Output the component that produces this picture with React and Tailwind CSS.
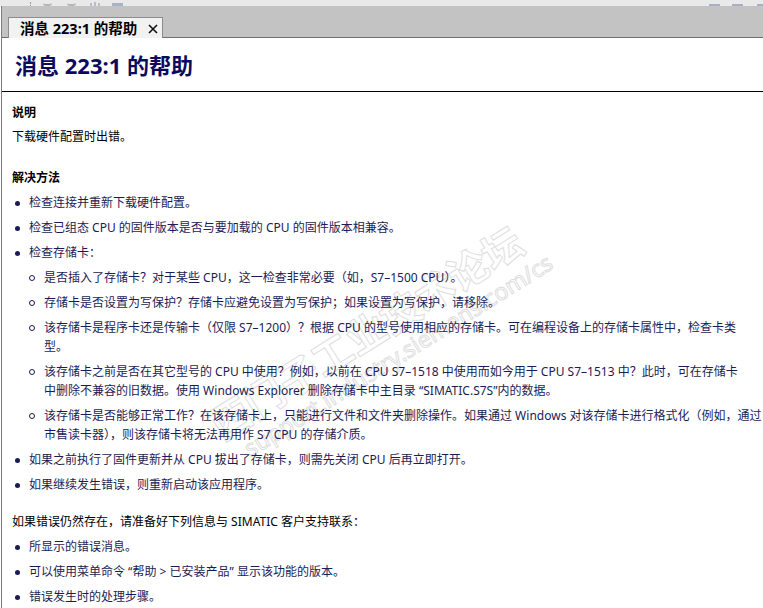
import React from "react";

const subItems = [
    ["是否插入了存储卡？对于某些 CPU，这一检查非常必要（如，S7–1500 CPU）。"],
    ["存储卡是否设置为写保护？存储卡应避免设置为写保护；如果设置为写保护，请移除。"],
    [
        "该存储卡是程序卡还是传输卡（仅限 S7–1200）？根据 CPU 的型号使用相应的存储卡。可在编程设备上的存储卡属性中，检查卡类",
        "型。",
    ],
    [
        "该存储卡之前是否在其它型号的 CPU 中使用？例如，以前在 CPU S7–1518 中使用而如今用于 CPU S7–1513 中？此时，可在存储卡",
        "中删除不兼容的旧数据。使用 Windows Explorer 删除存储卡中主目录 “SIMATIC.S7S”内的数据。",
    ],
    [
        "该存储卡是否能够正常工作？在该存储卡上，只能进行文件和文件夹删除操作。如果通过 Windows 对该存储卡进行格式化（例如，通过",
        "市售读卡器），则该存储卡将无法再用作 S7 CPU 的存储介质。",
    ],
];

const Bullet = ({ children }) => (
    <li className="flex mt-[6px]">
        <span className="w-[17px] shrink-0 pl-[3px] pt-[8px]">
            <span className="block w-[5px] h-[5px] rounded-full bg-[#1c1c55]" />
        </span>
        <div className="min-w-0">{children}</div>
    </li>
);

const SubBullet = ({ lines }) => (
    <li className="flex mt-[6px]">
        <span className="w-[15px] shrink-0 pt-[7px]">
            <span className="block w-[6px] h-[6px] rounded-full border border-[#1c1c55]" />
        </span>
        <div className="whitespace-nowrap">
            {lines.map((l, i) => (
                <div key={i}>{l}</div>
            ))}
        </div>
    </li>
);

const App = () => {
    return (
        <div className="relative w-[763px] h-[608px] overflow-hidden bg-white font-['Noto_Sans','Noto_Sans_CJK_SC',sans-serif]">
            {/* toolbar, mostly cut off above */}
            <div className="h-[6px] bg-[#e9e9e9] flex items-end">
                <span className="ml-[30px] h-[4px] border-l border-dotted border-[#9a9a9a]" />
                <span className="ml-[12px] w-[9px] h-[3px] rounded-b-full border-b-2 border-[#b5b5b5]" />
                <span className="ml-[15px] w-[9px] h-[3px] rounded-b-full border-b-2 border-[#b5b5b5]" />
                <span className="ml-[14px] flex items-end gap-[2px]">
                    <span className="w-[2px] h-[3px] bg-[#b8bdd0]" />
                    <span className="w-[2px] h-[4px] bg-[#b8bdd0]" />
                    <span className="w-[2px] h-[3px] bg-[#b8bdd0]" />
                </span>
                <span className="ml-[12px] w-[11px] h-[3px] bg-[#aab1c8]" />
                <span className="ml-auto w-[11px] h-[2px] bg-[#a9b0c6] mr-[12px]" />
                <span className="w-[11px] h-[2px] bg-[#a9b0c6] mr-[14px]" />
                <span className="w-[6px] h-[2px] bg-[#a9b0c6]" />
            </div>

            <div className="ml-px border-l border-[#7c7c7c] h-full">
                {/* tab strip */}
                <div className="h-[32px] bg-[#c3c3c3] border-b border-[#6e6e6e] flex items-end">
                    <div className="ml-[6px] -mb-px h-[21px] w-[155px] bg-[#f2f2f2] border border-b-0 border-[#8c8c8c] flex items-center pl-[11px] gap-[11px]">
                        <span className="text-[14.5px] font-bold leading-none text-black whitespace-nowrap">消息 223:1 的帮助</span>
                        <svg width="10" height="10" viewBox="0 0 10 10" className="mt-px">
                            <path d="M1 1 L9 9 M9 1 L1 9" stroke="#111" strokeWidth="1.6" />
                        </svg>
                    </div>
                </div>

                {/* heading */}
                <div className="h-[54px] flex items-center pl-[13px] border-b border-black">
                    <h1 className="text-[22px] font-bold text-[#0b0b5e] leading-none">消息 223:1 的帮助</h1>
                </div>

                {/* body */}
                <div className="relative pl-[10px] pt-[11px] text-[12px] leading-[19px] text-black">
                    <div className="pointer-events-none absolute left-[200px] top-[318px] origin-top-left -rotate-[32deg] text-transparent [-webkit-text-stroke:1px_#dedede] whitespace-nowrap">
                        <div className="text-[40px] leading-[44px] font-bold">西门子工业技术论坛</div>
                        <div className="text-[23px] leading-[26px] pl-[16px]">support.industry.siemens.com/cs</div>
                    </div>

                    <div className="relative">
                        <p className="font-bold">说明</p>
                        <p className="mt-[5px]">下载硬件配置时出错。</p>
                        <p className="mt-[22px] font-bold">解决方法</p>
                        <ul className="text-[#1c1c55]">
                            <Bullet>检查连接并重新下载硬件配置。</Bullet>
                            <Bullet>检查已组态 CPU 的固件版本是否与要加载的 CPU 的固件版本相兼容。</Bullet>
                            <Bullet>
                                检查存储卡：
                                <ul>
                                    {subItems.map((lines, i) => (
                                        <SubBullet key={i} lines={lines} />
                                    ))}
                                </ul>
                            </Bullet>
                            <Bullet>如果之前执行了固件更新并从 CPU 拔出了存储卡，则需先关闭 CPU 后再立即打开。</Bullet>
                            <Bullet>如果继续发生错误，则重新启动该应用程序。</Bullet>
                        </ul>
                        <p className="mt-[18px]">如果错误仍然存在，请准备好下列信息与 SIMATIC 客户支持联系：</p>
                        <ul className="text-[#1c1c55]">
                            <Bullet>所显示的错误消息。</Bullet>
                            <Bullet>可以使用菜单命令 “帮助 &gt; 已安装产品” 显示该功能的版本。</Bullet>
                            <Bullet>错误发生时的处理步骤。</Bullet>
                        </ul>
                    </div>
                </div>
            </div>
        </div>
    );
};

export default App;
